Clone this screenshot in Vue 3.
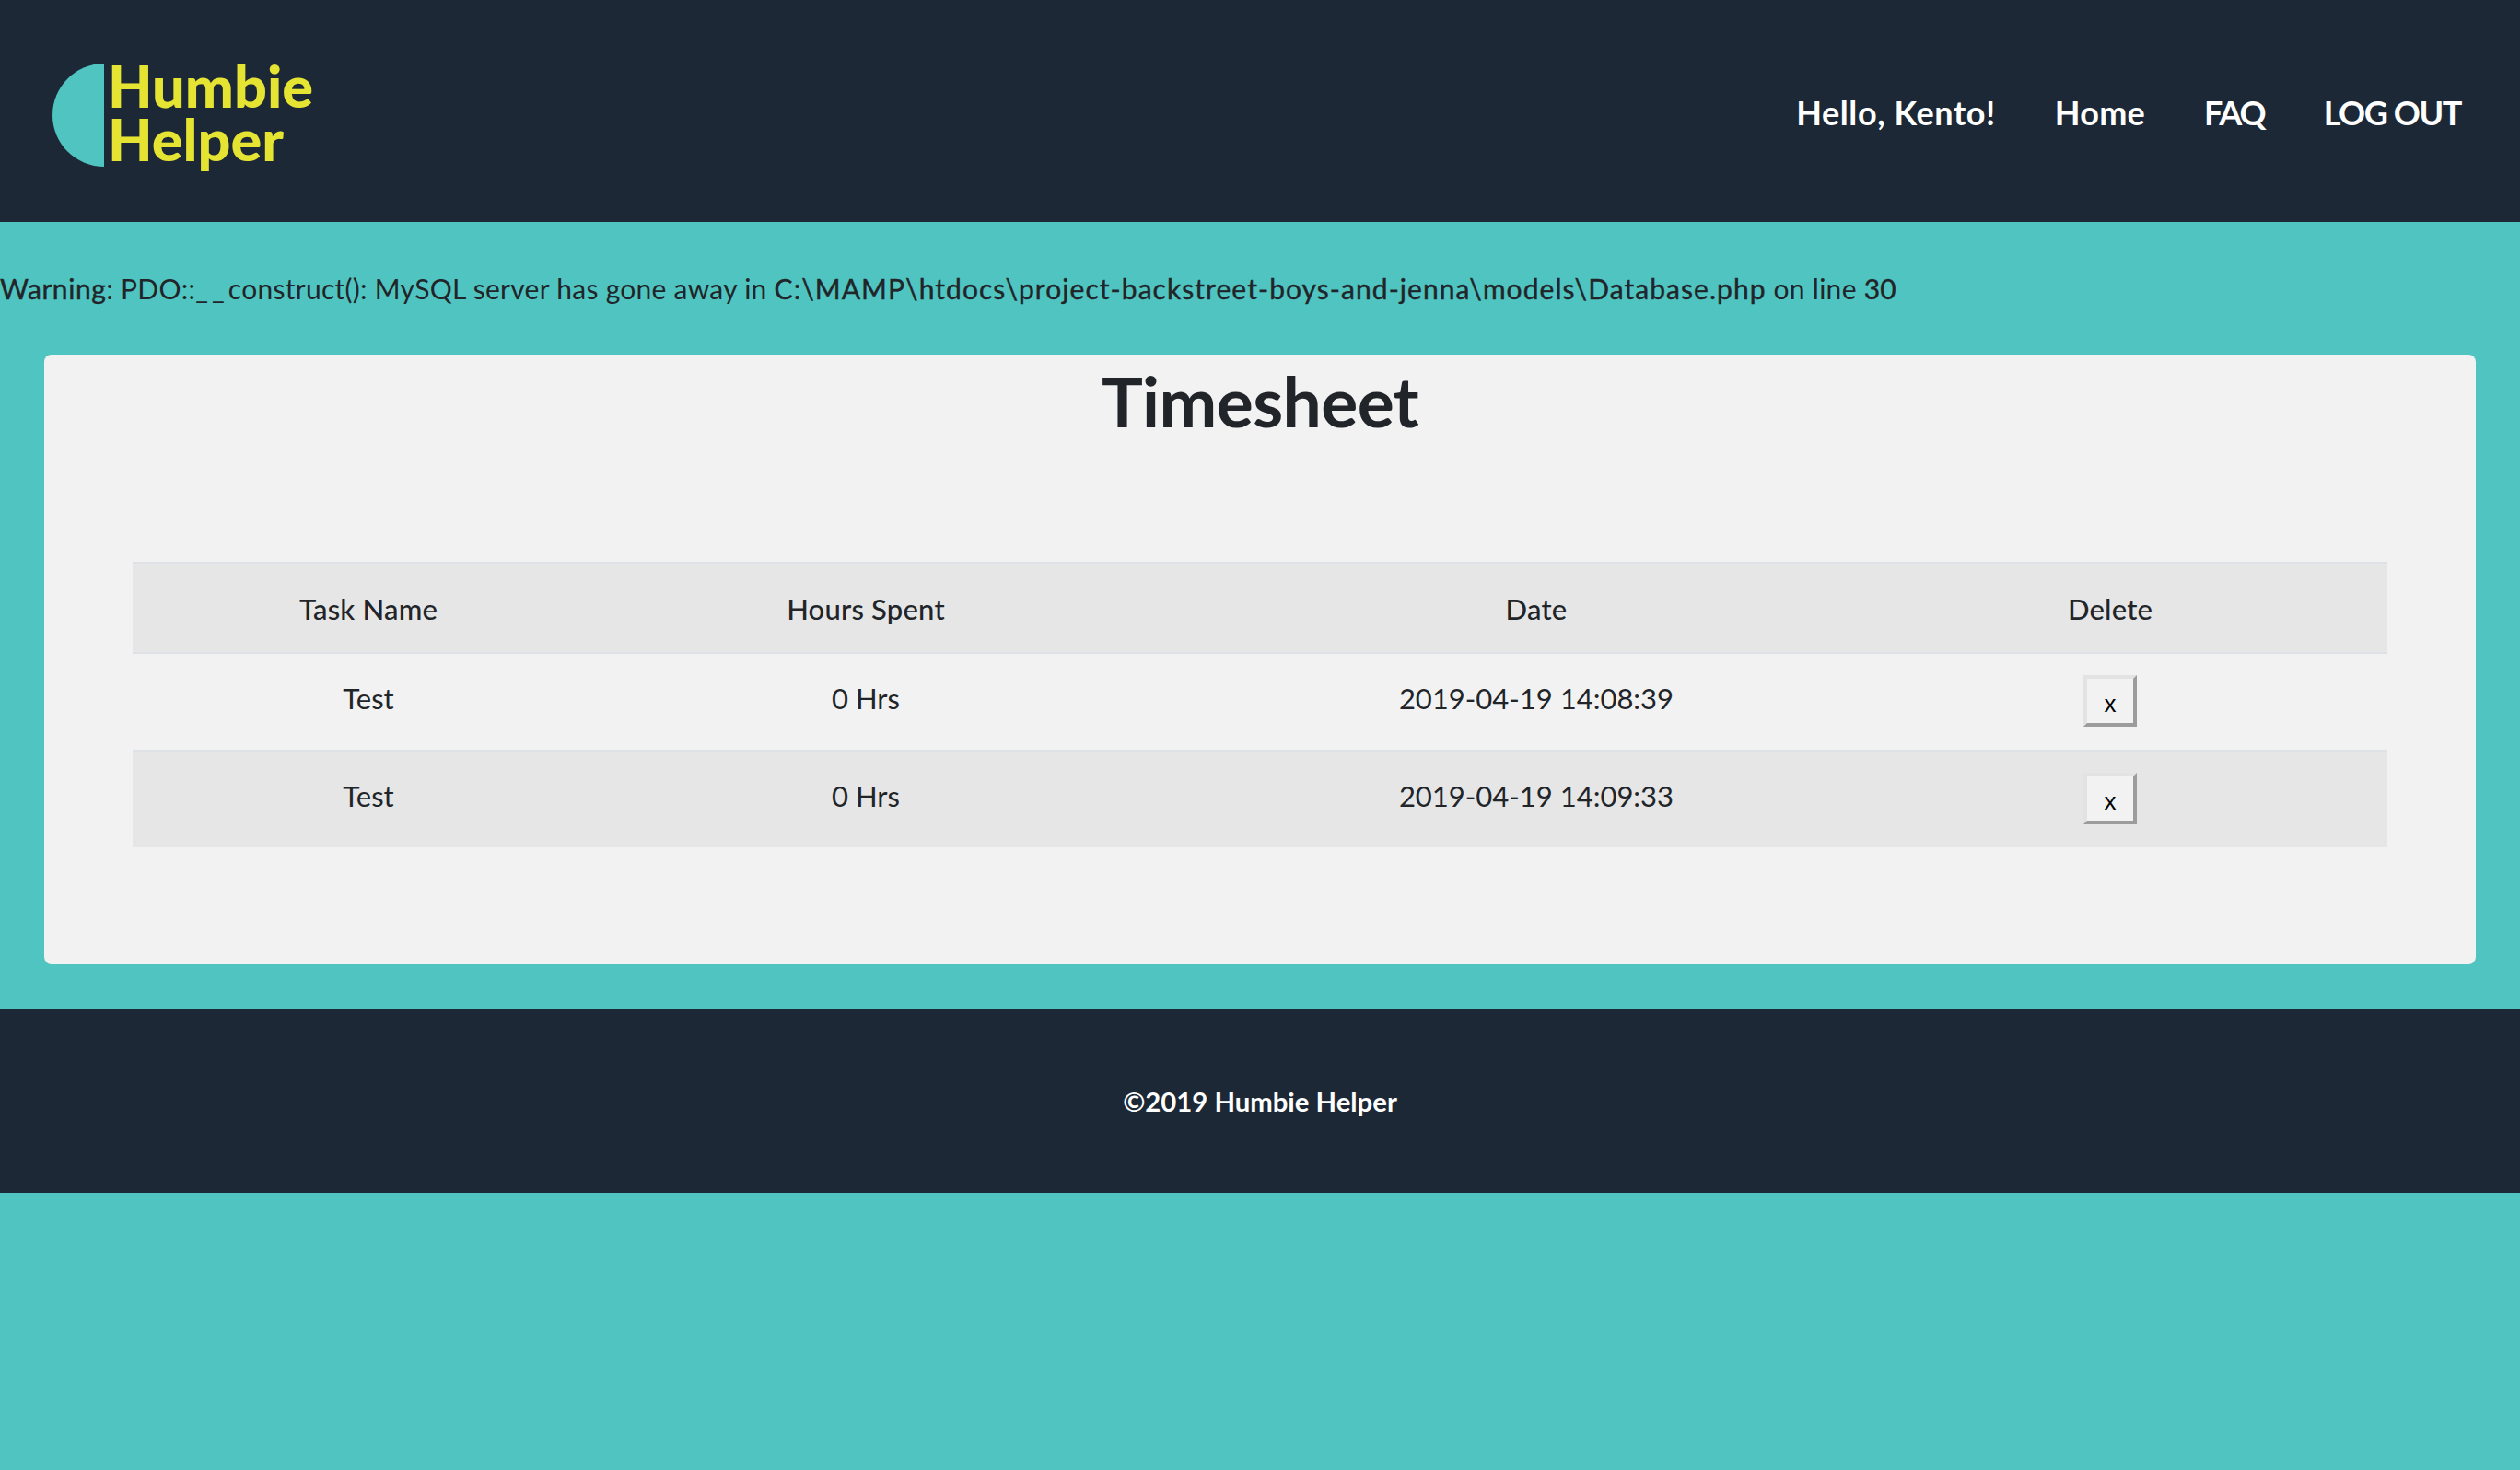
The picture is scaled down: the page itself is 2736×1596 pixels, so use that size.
<script setup>
const rows = [
  { name: 'Test', hours: '0 Hrs', date: '2019-04-19 14:08:39' },
  { name: 'Test', hours: '0 Hrs', date: '2019-04-19 14:09:33' }
]
</script>

<template>
  <div class="page">
    <header class="header">
      <div class="logo">
        <span class="half"></span>
        <span class="logo-text">Humbie<br />Helper</span>
      </div>
      <nav class="nav">
        <a class="n1">Hello, Kento!</a>
        <a class="n2">Home</a>
        <a class="n3">FAQ</a>
        <a class="n4">LOG OUT</a>
      </nav>
    </header>
    <main class="main">
      <p class="warning"><b class="strong first">Warning</b>: PDO::<span class="under">__</span>construct(): MySQL server has gone away in <b class="strong path">C:\MAMP\htdocs\project-backstreet-boys-and-jenna\models\Database.php</b> on line <b class="strong">30</b></p>
      <section class="card">
        <h1>Timesheet</h1>
        <table>
          <colgroup>
            <col class="c1" /><col class="c2" /><col class="c3" /><col class="c4" />
          </colgroup>
          <thead>
            <tr><th>Task Name</th><th>Hours Spent</th><th>Date</th><th>Delete</th></tr>
          </thead>
          <tbody>
            <tr v-for="(r, i) in rows" :key="i">
              <td>{{ r.name }}</td>
              <td>{{ r.hours }}</td>
              <td>{{ r.date }}</td>
              <td><button>x</button></td>
            </tr>
          </tbody>
        </table>
      </section>
    </main>
    <footer class="footer">©2019 Humbie Helper</footer>
  </div>
</template>

<style>
html, body { margin: 0; background: #4fc4c0; }
</style>

<style scoped>
.page { min-height: 1596px; background: #4fc4c0; font-family: Lato, "Noto Sans", sans-serif; color: #212529; font-size: 28px; }
.header { height: 241px; background: #1c2836; display: flex; justify-content: space-between; align-items: center; padding: 0 64px 0 57px; box-sizing: border-box; }
.logo { display: flex; align-items: center; gap: 4px; margin-top: 8px; }
.half { width: 56px; height: 112px; background: #4fc4c0; border-radius: 56px 0 0 56px; }
.logo-text { font-family: Lato, sans-serif; font-weight: 900; font-size: 63px; line-height: 58px; margin-bottom: 5px; color: #e6e433; }
.nav { display: flex; gap: 64px; color: #fff; font-size: 36px; font-weight: 700; margin-top: 2px; }
.n1 { letter-spacing: 0.6px; } .n2 { letter-spacing: 0.25px; } .n3 { letter-spacing: -2px; } .n4 { letter-spacing: -1.4px; }
.main { padding-top: 48px; }
.warning { margin: 0; height: 96px; line-height: 48px; white-space: nowrap; font-size: 30px; letter-spacing: 0.27px; }
.strong { font-weight: 400; -webkit-text-stroke: 0.4px #212529; }
.first { letter-spacing: 0.55px; }
.path { letter-spacing: 1.05px; }
.under { letter-spacing: 4px; }
.card { margin: 0 48px; height: 662px; background: #f2f2f2; border-radius: 8px; padding: 0 96px; box-sizing: border-box; }
h1 { margin: 0; text-align: center; font-family: Lato, sans-serif; font-size: 75px; letter-spacing: -0.6px; line-height: 100px; font-weight: 700; height: 225px; }
table { width: 100%; border-collapse: collapse; table-layout: fixed; }
.c1 { width: 512px; } .c2 { width: 568px; } .c3 { width: 888px; } .c4 { width: 480px; }
th, td { text-align: center; vertical-align: top; padding: 27px 0 0; border-top: 2px solid #dee2e6; line-height: 42px; font-weight: 400; font-size: 31px; box-sizing: border-box; }
th:last-child, td:last-child { padding-right: 122px; }
th { height: 98px; padding-top: 28px; font-weight: 500; letter-spacing: 0.2px; }
td { height: 105px; }
tbody tr:first-child td { height: 106px; }
td:last-child { padding-top: 23px; }
thead tr, tbody tr:nth-child(even) { background: #e6e6e6; }
button { display: block; margin: 0 auto; width: 58px; height: 56px; padding: 6px 0 0; background: #f2f2f2; border: 4px solid; border-color: #e3e3e3 #9c9c9c #9c9c9c #e3e3e3; font-family: "Liberation Sans", sans-serif; font-size: 26px; line-height: 1; color: #000; }
.footer { margin-top: 48px; height: 200px; background: #1c2836; color: #fff; font-weight: 700; font-size: 29.3px; display: flex; align-items: center; justify-content: center; }
</style>
